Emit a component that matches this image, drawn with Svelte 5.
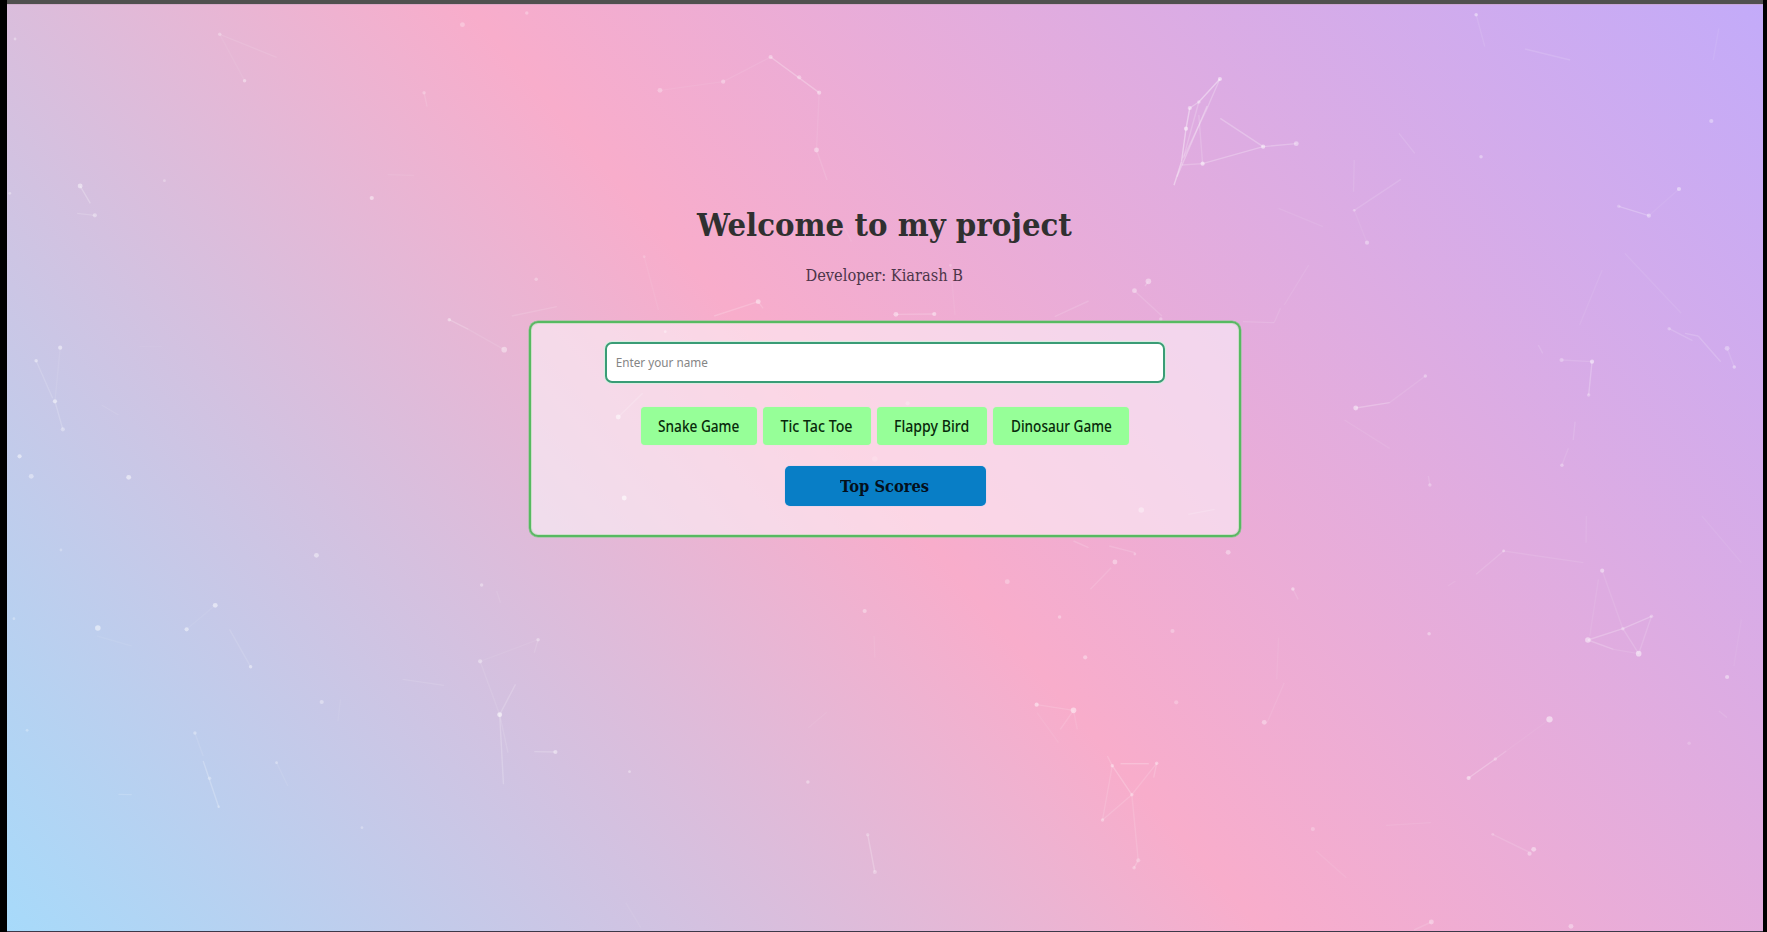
<script lang="ts">
  // Condenses a label horizontally to the given width.
  function fit(node: HTMLElement, width: number) {
    node.style.transform = `scaleX(${width / node.offsetWidth})`;
  }

  const games = [
    { label: 'Snake Game', box: 116, text: 81 },
    { label: 'Tic Tac Toe', box: 108, text: 72 },
    { label: 'Flappy Bird', box: 110, text: 75 },
    { label: 'Dinosaur Game', box: 136, text: 101 }
  ];

  const SX = 590 / 1568;
  const SY = 1 / 3;

  // The particle field is stored in tiles of 1568 by 1398 units.
  // Dots: [x, y, radius, opacity]; lines: [x1, y1, x2, y2, opacity].
  const tiles = [
    {
      x: 0, y: 0,
      dots: [[40,117,4,.45],[584,103,5,.4],[650,242,5,.55],[1229,74,7,.4],[1400,39,5,.4],[1127,278,5,.35],[213,558,7,.65],[252,646,6,.5],[437,542,4,.4],[26,580,4,.5],[988,594,6,.65],[1425,838,5,.4],[1194,959,5,.55],[1340,1049,8,.55],[160,1043,6,.65],[96,1082,5,.6],[146,1204,6,.7],[167,1288,6,.45],[52,1369,6,.7]],
      lines: [[213,558,240,610,.3],[205,640,252,646,.2],[1194,959,1245,988,.25],[1245,988,1340,1049,.12],[96,1082,140,1195,.18],[146,1204,167,1288,.22],[160,1043,146,1204,.1],[584,103,735,172,.12],[584,103,650,242,.08],[1030,524,1100,526,.1],[1360,948,1480,920,.15],[1127,278,1135,320,.14],[370,1040,430,1040,.05],[270,1215,315,1245,.1]]
    },
    {
      x: 590, y: 0,
      dots: [[186,271,7,.4],[354,245,6,.45],[480,171,6,.5],[556,232,6,.45],[609,278,6,.55],[602,450,7,.55],[447,905,7,.6],[144,770,4,.25],[813,943,7,.6],[915,942,6,.6],[1447,872,7,.55],[1484,844,8,.55],[1517,957,5,.4],[75,1251,7,.7],[844,1210,6,.3],[757,1377,8,.2],[200,995,4,.5],[958,796,4,.25]],
      lines: [[480,171,609,278,.32],[354,245,480,171,.1],[186,271,354,245,.08],[609,278,602,450,.1],[602,450,630,540,.13],[813,943,915,942,.22],[330,948,447,905,.22],[447,905,460,925,.18],[1447,872,1520,948,.15],[1475,858,1484,844,.25],[1235,950,1325,903,.16],[144,770,182,930,.08],[958,796,970,945,.08],[75,1251,140,1180,.2],[675,680,695,725,.1]]
    },
    {
      x: 1177, y: 0,
      dots: [[114,237,6,.7],[58,306,5,.5],[34,324,6,.6],[24,386,6,.75],[68,491,6,.75],[229,440,6,.7],[317,431,7,.55],[795,44,5,.6],[808,470,5,.5],[471,631,4,.4],[505,728,6,.5],[1420,363,6,.5],[1334,567,6,.6],[1254,647,6,.5],[1174,619,5,.3],[1308,986,5,.35],[1462,1045,7,.45],[1481,1101,5,.5],[1103,1085,6,.7],[1022,1080,6,.4],[1094,1185,5,.4],[660,1128,5,.45],[475,1224,7,.65],[1023,1396,5,.45]],
      lines: [[114,237,58,306,.5],[58,306,34,324,.35],[34,324,24,386,.5],[24,386,12,485,.5],[12,485,-8,556,.5],[114,237,76,335,.3],[76,335,16,475,.25],[80,318,0,530,.35],[58,306,18,470,.25],[58,345,68,491,.2],[12,495,68,491,.25],[68,491,229,440,.32],[115,355,229,440,.32],[229,440,317,431,.3],[795,44,818,140,.12],[925,147,1045,180,.15],[590,400,632,460,.14],[471,480,469,575,.12],[471,631,595,538,.15],[471,631,505,728,.08],[270,625,388,680,.1],[1174,619,1254,647,.28],[1254,647,1334,567,.08],[1190,760,1340,940,.1],[1130,810,1070,975,.09],[1308,986,1370,1022,.18],[1350,1000,1385,1008,.2],[1385,1008,1445,1085,.2],[1462,1045,1481,1101,.14],[1022,1080,1103,1085,.15],[1103,1085,1094,1185,.28],[1058,1265,1053,1320,.15],[1040,1345,1023,1396,.12],[475,1224,565,1208,.3],[565,1208,660,1128,.12],[445,1260,565,1345,.1],[285,915,350,795,.1],[175,965,258,968,.15],[258,968,275,925,.12],[960,1035,972,1060,.15],[1440,85,1425,180,.09]]
    },
    {
      x: 0, y: 466,
      dots: [[83,31,7,.55],[342,34,7,.7],[162,252,4,.35],[841,268,7,.6],[572,418,7,.7],[496,490,6,.65],[260,486,8,.7],[37,458,4,.4],[666,602,5,.6],[855,708,6,.5],[518,801,5,.45],[1280,357,5,.5],[1430,521,5,.5],[1276,586,6,.5],[1328,746,7,.8],[1476,858,6,.6],[735,890,4,.45],[557,937,5,.4],[72,793,4,.4],[962,1085,4,.4],[581,1022,4,.3]],
      lines: [[572,418,496,490,.08],[610,490,666,602,.14],[518,801,540,870,.12],[540,885,582,1025,.28],[735,890,765,960,.1],[315,985,350,986,.2],[1276,586,1328,746,.12],[1276,586,1430,521,.08],[1430,521,1420,560,.14],[1370,655,1328,746,.22],[1328,746,1350,860,.15],[1328,746,1338,955,.26],[1420,857,1476,858,.25],[1070,640,1180,658,.13],[1320,375,1330,410,.1],[905,700,898,765,.08],[258,510,350,540,.08]]
    },
    {
      x: 590, y: 466,
      dots: [[91,96,7,.8],[1465,132,8,.5],[1109,347,7,.4],[730,435,6,.5],[1395,288,7,.5],[1448,264,4,.35],[1248,453,5,.45],[1316,574,6,.5],[1187,716,6,.65],[1285,733,8,.65],[1548,495,6,.4],[1558,709,6,.35],[105,917,4,.5],[579,948,5,.5],[738,1106,5,.35],[757,1218,6,.4],[1388,899,5,.5],[1506,892,5,.5],[1440,986,5,.45],[1362,1062,5,.45],[1457,1183,6,.35],[1446,1205,5,.4]],
      lines: [[738,1106,757,1218,.28],[1187,716,1285,733,.17],[1285,733,1250,790,.15],[1285,733,1295,790,.12],[1410,893,1485,893,.3],[1388,899,1440,986,.25],[1388,899,1362,1062,.15],[1506,892,1440,986,.17],[1506,892,1498,935,.2],[1375,870,1388,899,.18],[1362,1062,1440,986,.17],[1440,986,1457,1183,.16],[1457,1183,1446,1205,.22],[1285,225,1325,245,.18],[1380,240,1448,260,.17],[1330,370,1385,305,.14],[755,510,757,575,.08],[580,785,630,738,.07],[1188,740,1245,830,.08],[95,1310,135,1385,.08]]
    },
    {
      x: 1177, y: 466,
      dots: [[672,57,5,.4],[136,259,7,.5],[308,369,5,.6],[868,255,4,.5],[1130,314,6,.6],[1092,522,8,.65],[1185,488,5,.4],[1261,451,5,.4],[1227,563,8,.7],[670,503,5,.5],[1462,633,6,.6],[990,760,9,.7],[1361,832,5,.25],[232,769,7,.5],[846,879,5,.4],[775,936,6,.65],[361,1089,6,.35],[948,1150,7,.6],[937,1163,6,.5],[839,1105,4,.3],[676,1368,7,.5],[1047,1381,7,.5]],
      lines: [[672,57,668,30,.15],[868,255,795,325,.15],[868,255,1080,290,.12],[1130,314,1185,488,.12],[1120,340,1097,510,.1],[1092,522,1185,488,.28],[1185,488,1261,451,.3],[1185,488,1227,563,.18],[1261,451,1227,563,.17],[1092,522,1160,550,.25],[1160,550,1227,563,.12],[775,936,846,879,.3],[846,879,875,855,.2],[875,855,990,760,.06],[839,1105,935,1158,.15],[555,1078,675,1070,.1],[285,650,240,769,.1],[270,515,265,640,.08],[370,1155,450,1235,.1],[630,1392,676,1368,.15],[720,360,740,345,.1],[1395,150,1500,290,.08],[1088,150,1087,230,.1],[1500,460,1480,600,.07],[308,369,322,400,.14],[30,145,100,130,.2],[1440,735,1462,755,.12]]
    }
  ];
</script>

<main>
  <div class="stage">
    <svg class="particles" viewBox="0 0 1767 932" aria-hidden="true">
      {#each tiles as t}
        {#each t.lines as [x1, y1, x2, y2, o]}
          <line x1={t.x + x1 * SX} y1={t.y + y1 * SY} x2={t.x + x2 * SX} y2={t.y + y2 * SY} opacity={o * 0.8} />
        {/each}
        {#each t.dots as [cx, cy, r, o]}
          <circle cx={t.x + cx * SX} cy={t.y + cy * SY} r={r * 0.35} opacity={o * 0.72} />
        {/each}
      {/each}
    </svg>

    <div class="content">
      <h1><span class="fit" use:fit={375}>Welcome to my project</span></h1>
      <p><span class="fit" use:fit={158}>Developer: Kiarash B</span></p>
      <section class="panel">
        <label class="field"><input type="text" placeholder="Enter your name" /></label>
        <div class="games">
          {#each games as g}
            <button class="game" style:width="{g.box}px"><span class="fit" use:fit={g.text}>{g.label}</span></button>
          {/each}
        </div>
        <button class="scores"><span class="fit" use:fit={89}>Top Scores</span></button>
      </section>
    </div>
  </div>
</main>

<style>
  :global(body) {
    margin: 0;
    background: #000;
  }
  main {
    box-sizing: border-box;
    width: 1767px;
    height: 932px;
    padding: 0 4px 0 7px;
    overflow: hidden;
    background: #000;
    font-family: "DejaVu Serif", serif;
  }
  .stage {
    position: relative;
    box-sizing: border-box;
    height: 932px;
    overflow: hidden;
    border-top: 4px solid #50504f;
    border-bottom: 1px solid #3d3849;
    background: linear-gradient(49.3deg, #a7dafa 0%, #f8adcb 49.2%, #c3abf9 100%);
    box-shadow: inset 0 1px rgba(200, 160, 190, 0.5);
  }
  .particles {
    position: absolute;
    left: -7px;
    top: -4px;
    width: 1767px;
    height: 932px;
  }
  line {
    stroke: #fff;
    stroke-width: 1.4;
  }
  circle {
    fill: #fff;
  }
  .content {
    position: relative;
    display: flex;
    flex-direction: column;
    align-items: center;
    width: 713px;
    margin: 202px 0 0 521px;
  }
  .fit {
    display: inline-block;
    flex: none;
    white-space: nowrap;
  }
  h1 {
    margin: 0;
    color: #303030;
    font-size: 31px;
    line-height: 38px;
    font-weight: 700;
  }
  p {
    margin: 20px 0 33px;
    color: #4c3549;
    font-size: 16px;
    line-height: 24px;
  }
  .panel {
    box-sizing: border-box;
    display: flex;
    flex-direction: column;
    align-items: center;
    width: 712px;
    height: 216px;
    margin-left: 1px;
    padding: 19px 0 0;
    border: 2px solid #57b961;
    border-radius: 9px;
    background: rgba(255, 255, 255, 0.5);
    background-clip: padding-box;
    box-shadow: 0 0 0 0.5px #86c78c, inset 0 0 0 1px rgba(150, 225, 150, 0.4);
  }
  .field {
    box-sizing: border-box;
    width: 560px;
    height: 41px;
    border: 2px solid #3a9c76;
    border-radius: 7px;
    background: #fff;
    overflow: hidden;
    box-shadow: 0 0 1px 1px #d5efdf;
  }
  input {
    display: block;
    box-sizing: border-box;
    width: 640px;
    height: 37px;
    padding: 0 0 1px 10px;
    border: 0;
    outline: 0;
    background: transparent;
    font: 13.4px "Noto Sans", sans-serif;
    transform: scaleX(0.875);
    transform-origin: left;
  }
  input::placeholder {
    color: #858585;
    opacity: 1;
  }
  .games {
    display: flex;
    gap: 6px;
    margin-top: 24px;
  }
  button {
    display: flex;
    align-items: center;
    justify-content: center;
    padding: 0;
    border: 0;
  }
  .game {
    height: 38px;
    border-radius: 4px;
    padding-bottom: 1px;
    background: #96ff98;
    color: #082a0b;
    font: 500 16px "Noto Sans", sans-serif;
    box-shadow: 0 0 1px rgba(180, 247, 186, 0.8);
  }
  .scores {
    width: 201px;
    height: 40px;
    margin-top: 21px;
    border-radius: 5px;
    background: #087ec6;
    color: #04101c;
    font: 700 16px "DejaVu Serif", serif;
    box-shadow: 0 0 1px #90bde4;
  }
</style>
